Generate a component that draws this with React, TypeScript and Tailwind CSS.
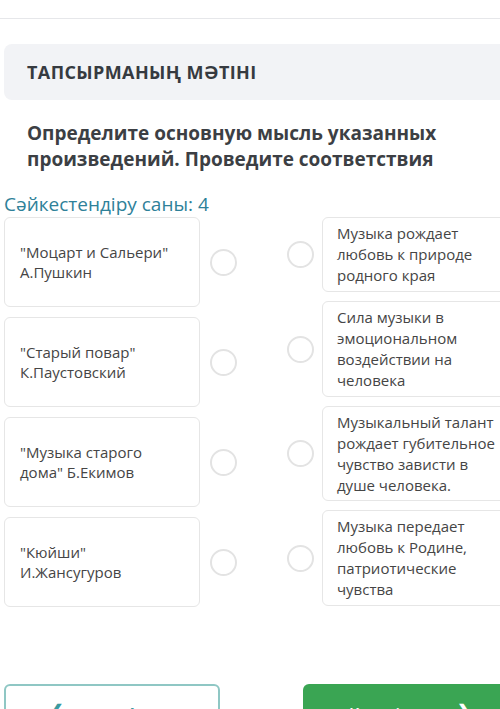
import React from 'react';

const leftItems = [
  ['"Моцарт и Сальери"', 'А.Пушкин'],
  ['"Старый повар"', 'К.Паустовский'],
  ['"Музыка старого', 'дома" Б.Екимов'],
  ['"Кюйши"', 'И.Жансугуров'],
];

const rightItems = [
  { text: 'Музыка рождает любовь к природе родного края', h: 'h-[75px]' },
  { text: 'Сила музыки в эмоциональном воздействии на человека', h: 'h-[96px]' },
  { text: 'Музыкальный талант рождает губительное чувство зависти в душе человека.', h: 'h-[95px]' },
  { text: 'Музыка передает любовь к Родине, патриотические чувства', h: 'h-[96px]' },
];

const Dot = () => (
  <div className="w-[27px] h-[27px] rounded-full border-2 border-[#e3e3e3] bg-white shrink-0" />
);

const App: React.FC = () => {
  return (
    <div
      className="w-[500px] h-[709px] overflow-hidden bg-white text-[#454545]"
      style={{ fontFamily: '"Open Sans", "Noto Sans", sans-serif' }}
    >
      <div className="h-[19px] border-b border-[#e6e7ea]" />

      <div className="mt-[25px] ml-[4px] h-[56px] rounded-l-lg bg-[#f2f3f6] flex items-center pl-[23px]">
        <h1 className="text-[18px] font-bold text-[#363a40] tracking-[0.4px]">ТАПСЫРМАНЫҢ МӘТІНІ</h1>
      </div>

      <p className="mt-[20px] px-[27px] text-[19px] leading-[26px] font-bold text-[#3c3f44]">
        Определите основную мысль указанных произведений. Проведите соответствия
      </p>

      <div className="mt-[20px] pl-[4px] text-[19px] leading-[24px] text-[#2e8199]">Сәйкестендіру саны: 4</div>

      <div className="mt-[1px] flex">
        <div className="flex flex-col gap-[10px] pl-[4px]">
          {leftItems.map((item, i) => (
            <div key={i} className="flex items-center">
              <div className="w-[196px] h-[90px] rounded-md border border-[#e6e6e6] flex items-center px-[15px] text-[15px] leading-[20px]">
                <div>
                  {item[0]}
                  <br />
                  {item[1]}
                </div>
              </div>
              <div className="ml-[10px]">
                <Dot />
              </div>
            </div>
          ))}
        </div>

        <div className="flex flex-col gap-[9px] ml-[50px]">
          {rightItems.map((item, i) => (
            <div key={i} className="flex items-center">
              <Dot />
              <div
                className={`ml-[8px] w-[196px] shrink-0 ${item.h} rounded-md border border-[#e6e6e6] flex items-center px-[14px] text-[15px] leading-[21px]`}
              >
                <div className="w-[166px]">{item.text}</div>
              </div>
            </div>
          ))}
        </div>
      </div>

      <div className="mt-[77px] flex items-start">
        <button className="ml-[4px] w-[216px] shrink-0 h-[50px] rounded-md border-2 border-[#8fc7c4] bg-white flex items-start pt-[16px] text-[#3a9aa0]">
          <span className="ml-[42px] text-[20px] leading-none">❮</span>
          <span className="ml-[62px] text-[16px] font-semibold">Артқа</span>
        </button>
        <button className="ml-[83px] w-[210px] shrink-0 h-[50px] rounded-md bg-[#3aa553] flex items-start pt-[18px] text-white">
          <span className="ml-[46px] text-[16px] font-semibold">Келесі</span>
          <span className="ml-[56px] text-[20px] leading-none">❯</span>
        </button>
      </div>
    </div>
  );
};

export default App;
